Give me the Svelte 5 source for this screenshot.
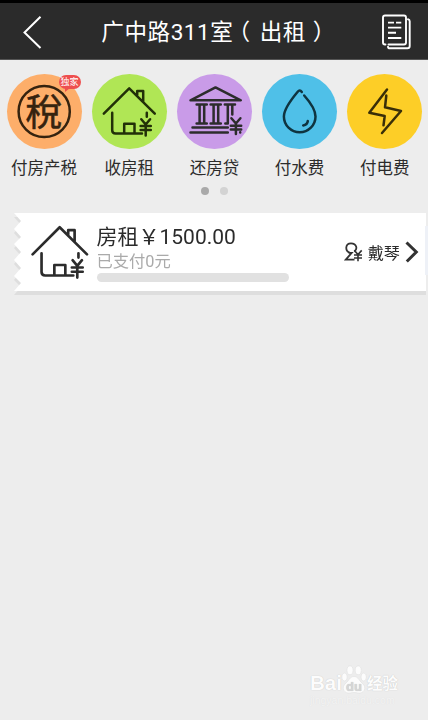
<script>
    let { name = '广中路311室', status = '出租' } = $props();

    let page = $state(0);

    const actions = [
        { id: 'tax', label: '付房产税', badge: '独家' },
        { id: 'rent', label: '收房租' },
        { id: 'loan', label: '还房贷' },
        { id: 'water', label: '付水费' },
        { id: 'power', label: '付电费' }
    ];

    const bills = [
        { name: '房租', amount: '1500.00', paid: 0, progress: 0, person: '戴琴' }
    ];
</script>

{#snippet house()}
    <path d="M11.8 39.7 37.2 14.3 62.8 39.7M45.2 21v-4h6v10.5" />
    <path d="M20.2 38.7v17.6q0 3.2 3.4 3.2h26.4M32.2 59.3v-9.6h10.3v9.6" />
    <path d="M54.8 38.7v4M49.3 45.2l4.4 5.3 4.4-5.3M53.7 50.5v11M48.6 52h10.2M48.6 56h10.2" />
{/snippet}

<div class="screen">
    <header class="header">
        <button class="header__btn" aria-label="back">
            <svg width="20" height="36" viewBox="0 0 20 36">
                <path d="M17.5 2.8 1.5 18.5 17.5 34" fill="none" stroke="#fff" stroke-width="2" />
            </svg>
        </button>
        <h1 class="header__title">{name}<span class="open">（</span>{status}<span class="close">）</span></h1>
        <button class="header__btn" aria-label="records">
            <svg width="30" height="36" viewBox="0 0 30 36" fill="none" stroke="#fff" stroke-width="1.9" stroke-linecap="round">
                <path d="M4.5 30.5H4q-2 0-2-2V3.5q0-2 2-2h19q2 0 2 2v25q0 2-2 2H7.5" />
                <path d="M27 5.3q1.7.2 1.7 2V32q0 2.3-2.3 2.3H9q-2 0-2-1.6" />
                <path stroke-linecap="butt" d="M7 8.6h6M15 8.6h5.3M7 13.6h13.3M7 18.8h8M7 24h13.3" />
            </svg>
        </button>
    </header>

    <nav class="actions">
        {#each actions as action}
            <button class="action">
                <span class="action__icon action__icon_{action.id}">
                    <svg width="75" height="75" viewBox="0 0 75 75">
                        {#if action.id === 'tax'}
                            <circle cx="37.2" cy="37.5" r="25.6" />
                            <text class="glyph" x="37" y="51.5" text-anchor="middle">稅</text>
                        {:else if action.id === 'rent'}
                            {@render house()}
                        {:else if action.id === 'loan'}
                            <path d="M13.5 26.3 38.5 13.4 63.8 26.3z" />
                            <path d="M19.6 30.4h10.2M19.6 49.4h10.2M22.6 30.4v19M27.2 30.4v19" />
                            <path d="M33.6 30.4h10.2M33.6 49.4h10.2M36.6 30.4v19M41.2 30.4v19" />
                            <path d="M47.8 30.4H58M50.8 30.4v19h-2.5M55.3 30.4v10" />
                            <path d="M15.5 53.5h35.3M13.5 58.5h37.3" />
                            <path d="M54.4 44.2l4.5 5.3 4.5-5.3M58.9 49.5V60M53.8 51.8h10.4M53.8 55.6h10.4M63.2 58.2v.2" />
                        {:else if action.id === 'water'}
                            <path d="M39.8 18q-2-2.8-4.3 0C30.5 24 21.9 34.5 21.9 42.5a15.8 15.8 0 0 0 31.6 0C53.5 36 47.5 27.5 42.2 21.5" />
                            <path d="M45.8 47q-.4 3.7-4.6 4.4" />
                        {:else}
                            <path d="M40 15.5 22.3 38.7 37.7 42l-1.2 9.3M39.3 21.5 38 33.3 54 37 35 59" />
                        {/if}
                    </svg>
                    {#if action.badge}
                        <span class="action__badge">{action.badge}</span>
                    {/if}
                </span>
                <span class="action__label">{action.label}</span>
            </button>
        {/each}
    </nav>

    <div class="dots">
        {#each [0, 1] as n}
            <button class="dot" class:dot_active={page === n} aria-label="page {n + 1}" onclick={() => (page = n)}></button>
        {/each}
    </div>

    {#each bills as bill}
        <div class="bill">
            <div class="bill__body">
                <svg class="bill__house" width="80" height="78" viewBox="0 1 75 73">
                    {@render house()}
                </svg>
                <div class="bill__info">
                    <div class="bill__name">{bill.name}￥{bill.amount}</div>
                    <div class="bill__paid">已支付{bill.paid}元</div>
                    <div class="bar"><div class="bar__fill" style="width: {bill.progress}%"></div></div>
                </div>
                <div class="bill__person">
                    <svg width="20" height="20" viewBox="0 0 20 20" fill="none" stroke="#333" stroke-width="1.8">
                        <path d="M6 10.8C.6 9 1.2 1.3 7 1.3s6.8 5.7 3.3 8.2M4.5 10.8h3.2L1.8 17.6h8.7" />
                        <path d="M10.3 8.4l3.7 4.2 3.7-4.2M14 12.6v6.6M10 13h8M10 16h8" stroke-width="1.6" />
                    </svg>
                    <span>{bill.person}</span>
                    <svg width="14" height="22" viewBox="0 0 14 22">
                        <path d="M1.5 1.5 11.3 11 1.8 20.5" fill="none" stroke="#333" stroke-width="3" />
                    </svg>
                </div>
            </div>
        </div>
    {/each}

    <div class="edge"></div>

    <div class="watermark">
        <div class="watermark__logo">
            <span>Bai</span>
            <svg width="26" height="29" viewBox="0 0 26 29">
                <ellipse cx="3.5" cy="12" rx="2.7" ry="4" />
                <ellipse cx="9" cy="5.3" rx="3" ry="4.4" />
                <ellipse cx="17.2" cy="5.3" rx="3" ry="4.4" />
                <ellipse cx="22.7" cy="12" rx="2.7" ry="4" />
                <path d="M13 11.5c4 0 5 4 8 6.5 6 5 1 11-4 10-3-.6-5-.6-8 0-5 1-10-5-4-10 3-2.5 4-6.5 8-6.5z" />
                <text x="13" y="25.5" text-anchor="middle">du</text>
            </svg>
            <span class="watermark__cn">经验</span>
        </div>
        <div class="watermark__url">jingyan.baidu.com</div>
    </div>
</div>

<style>
    :global(body) {
        background: #ededed;
    }
    button {
        padding: 0;
        border: 0;
        background: none;
        color: inherit;
        font: inherit;
    }
    svg {
        display: block;
    }
    .screen {
        position: relative;
        width: 428px;
        height: 720px;
        overflow: hidden;
        background: #ededed;
        color: #2b2b2b;
        font-family: Roboto, "Noto Sans CJK SC", sans-serif;
    }
    .header {
        display: flex;
        align-items: center;
        justify-content: space-between;
        box-sizing: border-box;
        height: 60px;
        padding: 3px 17px 1px 23px;
        border-top: 3px solid #000;
        border-bottom: 1px solid #555;
        background: #2b2b2b;
        color: #fff;
    }
    .header__title {
        margin: 0;
        padding: 2px 0 0 5px;
        font-size: 22.6px;
        font-weight: 400;
        line-height: 30px;
        letter-spacing: 0.5px;
        white-space: nowrap;
    }
    .open,
    .close {
        font-feature-settings: "halt";
    }
    .open {
        margin: 0 9px 0 5.5px;
    }
    .close {
        margin: 0 3px 0 7px;
    }
    .actions {
        display: flex;
        gap: 10.2px;
        padding: 14px 0 0 6.5px;
    }
    .action {
        flex: none;
        width: 75px;
    }
    .action__icon {
        position: relative;
        display: block;
        width: 75px;
        height: 75px;
        border-radius: 50%;
    }
    .action__icon svg,
    .bill__house {
        fill: none;
        stroke: #2c2c2c;
        stroke-width: 2.5;
        stroke-linecap: round;
        stroke-linejoin: round;
    }
    .action__icon .glyph {
        fill: #35230f;
        stroke: #35230f;
        stroke-width: 0.5;
        font-family: "Noto Sans CJK TC", sans-serif;
        font-size: 37px;
        font-weight: 400;
    }
    .action__icon_tax {
        background: #fdae6a;
    }
    .action__icon_tax svg {
        stroke: #35230f;
    }
    .action__icon_rent {
        background: #b0e655;
    }
    .action__icon_rent svg {
        stroke: #223008;
    }
    .action__icon_loan {
        background: #c99be8;
    }
    .action__icon_water {
        background: #4fc0e8;
    }
    .action__icon_water svg {
        stroke: #0f3440;
    }
    .action__icon_power {
        background: #fdce27;
    }
    .action__icon_power svg {
        stroke: #3a2f08;
    }
    .action__badge {
        position: absolute;
        top: 1px;
        left: 52px;
        width: 22px;
        height: 14px;
        border-radius: 7px;
        background: #ee4f4f;
        color: #fff;
        font-size: 9px;
        line-height: 14px;
        text-align: center;
        white-space: nowrap;
    }
    .action__badge:after {
        content: '';
        position: absolute;
        left: 6px;
        bottom: -3px;
        border-top: 4px solid #ee4f4f;
        border-right: 5px solid transparent;
    }
    .action__label {
        display: block;
        margin: 9px -4px 0;
        font-size: 16.5px;
        line-height: 22px;
        text-align: center;
        white-space: nowrap;
    }
    .dots {
        display: flex;
        justify-content: center;
        gap: 11px;
        margin-top: 7px;
    }
    .dot {
        width: 8px;
        height: 8px;
        border-radius: 50%;
        background: #d3d3d3;
    }
    .dot_active {
        background: #a9a9a9;
    }
    .bill {
        margin: 18px 2px 0 14px;
        filter: drop-shadow(0 4px 0 #dedede);
    }
    .bill__body {
        display: flex;
        height: 78px;
        padding-left: 5.5px;
        background: #fff;
        clip-path: polygon(0 0, 100% 0, 100% 100%, 0 100%, 7px 70px, 0 63px, 7px 55px, 0 47px, 7px 39px, 0 31px, 7px 24px, 0 16px, 7px 8px);
    }
    .bill__info {
        width: 192.5px;
        margin-left: -3px;
    }
    .bill__name {
        margin-top: 10px;
        font-size: 21px;
        line-height: 28px;
        white-space: nowrap;
    }
    .bill__paid {
        color: #aaa;
        font-size: 16.3px;
        line-height: 22px;
    }
    .bar {
        height: 9px;
        border-radius: 5px;
        background: #e1e1e1;
        overflow: hidden;
    }
    .bar__fill {
        height: 100%;
        background: #b0e655;
    }
    .bill__person {
        display: flex;
        align-items: center;
        gap: 4px;
        margin-left: auto;
        padding-right: 7px;
        font-size: 16.2px;
    }
    .bill__person span {
        margin-right: 1px;
    }
    /* next page peeking in at the right side */
    .edge {
        position: absolute;
        right: 0;
        top: 226px;
        width: 3px;
        height: 49px;
        background: #eef1f7;
    }
    .watermark {
        position: absolute;
        left: 310px;
        top: 665px;
        color: #fcfcfc;
        font-family: "Liberation Sans", "Noto Sans CJK SC", sans-serif;
        text-shadow: 0 0 1px #bbb;
    }
    .watermark__logo {
        display: flex;
        align-items: flex-end;
        font-size: 20.5px;
        font-weight: 700;
        line-height: 22px;
    }
    .watermark__logo svg {
        margin-left: -1px;
        fill: #fcfcfc;
        stroke: #dcdcdc;
        stroke-width: 0.5;
    }
    .watermark__logo text {
        fill: #d6d6d6;
        stroke: none;
        font-size: 13px;
    }
    .watermark__cn {
        font-size: 15.5px;
        line-height: 20px;
    }
    .watermark__url {
        color: #f3f3f3;
        font-size: 10.5px;
        line-height: 13px;
        text-shadow: 0 0 1px #ddd;
    }
</style>
